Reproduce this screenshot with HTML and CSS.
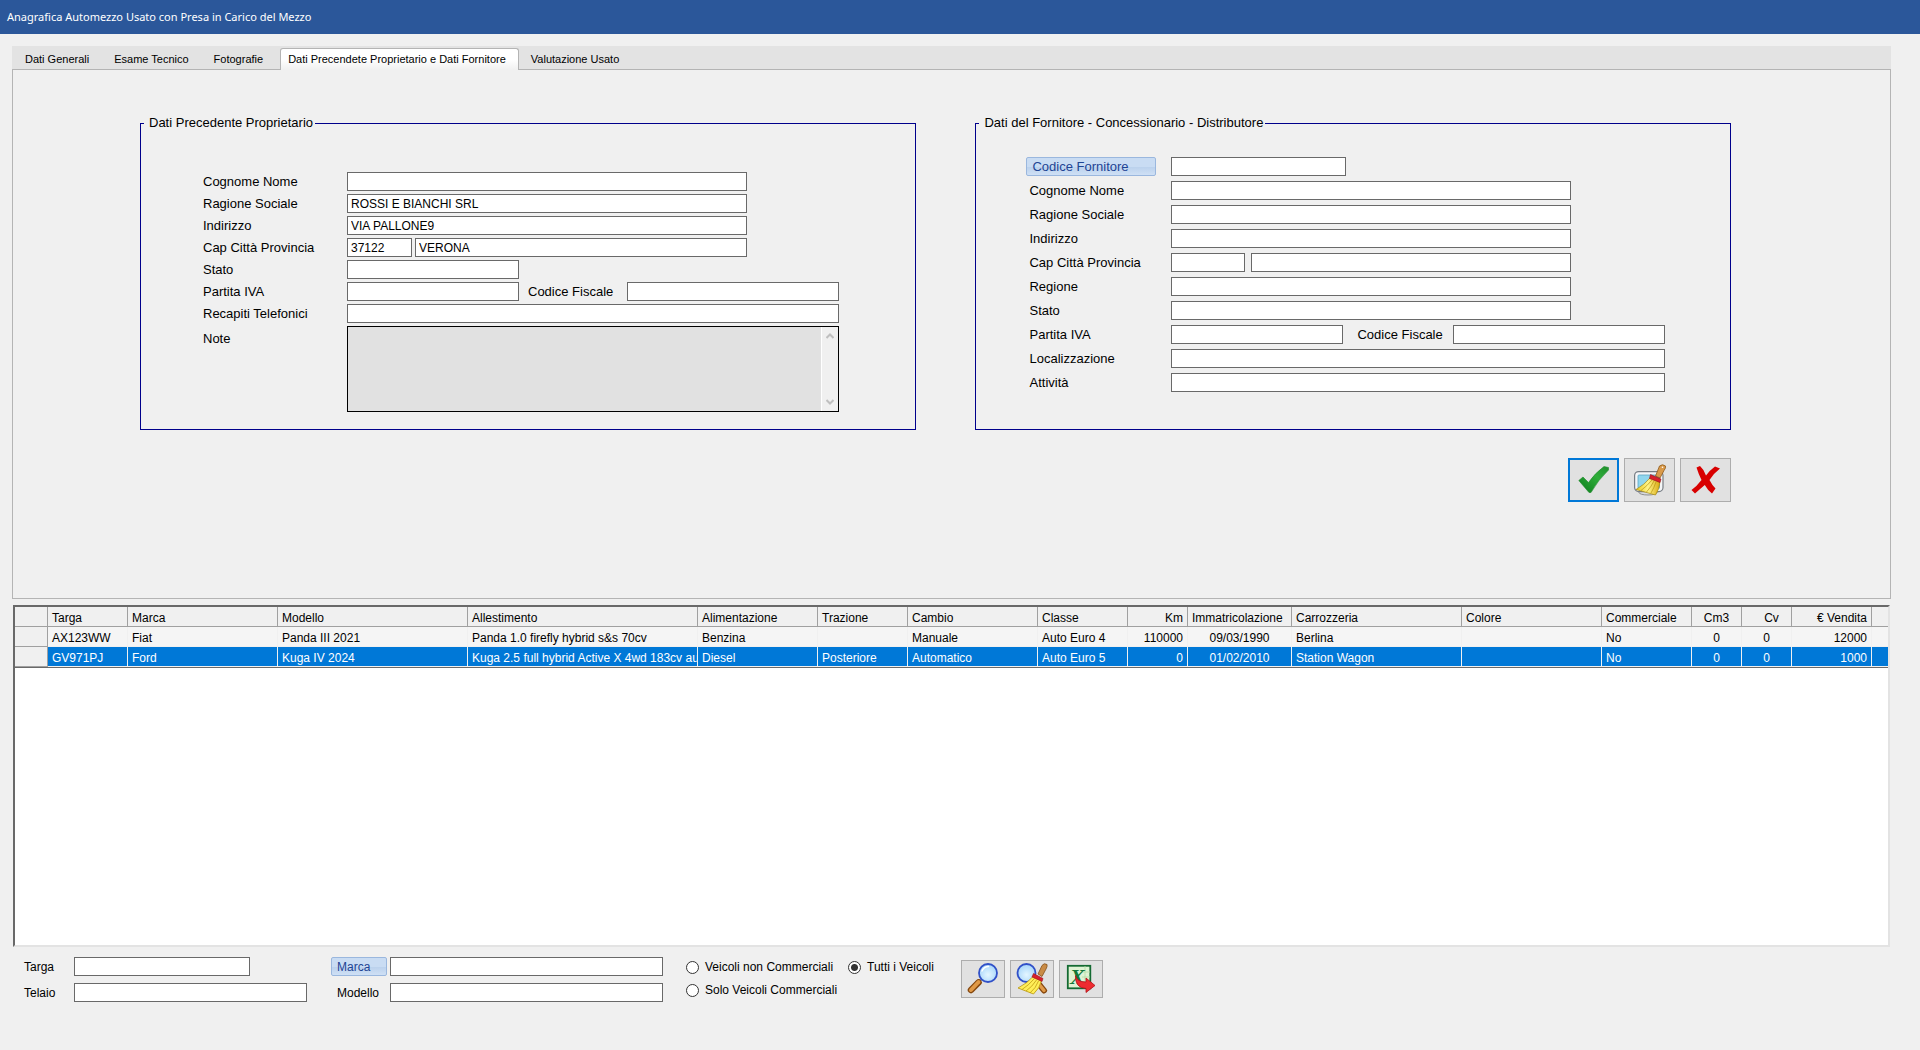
FILE: index.html
```html
<!DOCTYPE html>
<html lang="it">
<head>
    <meta charset="UTF-8">
    <meta name="viewport" content="width=device-width, initial-scale=1.0">
    <title>Anagrafica Automezzo Usato</title>
    <link rel="stylesheet" href="styles.css">
</head>
<body>
<header class="titlebar">Anagrafica Automezzo Usato con Presa in Carico del Mezzo</header>
<main class="main">
    <div class="tabs" role="tablist">
        <button class="tab" type="button" role="tab">Dati Generali</button>
        <button class="tab" type="button" role="tab">Esame Tecnico</button>
        <button class="tab" type="button" role="tab">Fotografie</button>
        <button class="tab active" type="button" role="tab" aria-selected="true">Dati Precendete Proprietario e Dati Fornitore</button>
        <button class="tab" type="button" role="tab">Valutazione Usato</button>
    </div>
    <section class="panel">
        <div class="boxes">
            <fieldset class="box owner">
                <legend>Dati Precedente Proprietario</legend>
                <div class="row">
                    <label for="o-nome">Cognome Nome</label>
                    <input class="w-long" id="o-nome" type="text">
                </div>
                <div class="row">
                    <label for="o-ragione">Ragione Sociale</label>
                    <input class="w-long" id="o-ragione" type="text" value="ROSSI E BIANCHI SRL">
                </div>
                <div class="row">
                    <label for="o-indirizzo">Indirizzo</label>
                    <input class="w-long" id="o-indirizzo" type="text" value="VIA PALLONE9">
                </div>
                <div class="row">
                    <label for="o-cap">Cap Città Provincia</label>
                    <div class="pair w-long">
                        <input class="cap" id="o-cap" type="text" value="37122">
                        <input class="grow" type="text" value="VERONA" aria-label="Città">
                    </div>
                </div>
                <div class="row">
                    <label for="o-stato">Stato</label>
                    <input class="w-short" id="o-stato" type="text">
                </div>
                <div class="row">
                    <label for="o-iva">Partita IVA</label>
                    <input class="w-short" id="o-iva" type="text">
                    <label class="second" for="o-cf">Codice Fiscale</label>
                    <input class="w-cf" id="o-cf" type="text">
                </div>
                <div class="row">
                    <label for="o-tel">Recapiti Telefonici</label>
                    <input class="w-full" id="o-tel" type="text">
                </div>
                <div class="row note-row">
                    <label for="o-note">Note</label>
                    <div class="note w-full">
                        <textarea id="o-note"></textarea>
                        <div class="scroll">
                            <svg width="8" height="6" viewBox="0 0 8 6"><path d="M0.5 5L4 1.5L7.5 5"/></svg>
                            <svg width="8" height="6" viewBox="0 0 8 6"><path d="M0.5 1L4 4.5L7.5 1"/></svg>
                        </div>
                    </div>
                </div>
            </fieldset>
            <fieldset class="box supplier">
                <legend>Dati del Fornitore - Concessionario - Distributore</legend>
                <div class="row">
                    <button class="link-btn" type="button">Codice Fornitore</button>
                    <input class="w-code" type="text" aria-label="Codice Fornitore">
                </div>
                <div class="row">
                    <label for="s-nome">Cognome Nome</label>
                    <input class="w-long" id="s-nome" type="text">
                </div>
                <div class="row">
                    <label for="s-ragione">Ragione Sociale</label>
                    <input class="w-long" id="s-ragione" type="text">
                </div>
                <div class="row">
                    <label for="s-indirizzo">Indirizzo</label>
                    <input class="w-long" id="s-indirizzo" type="text">
                </div>
                <div class="row">
                    <label for="s-cap">Cap Città Provincia</label>
                    <div class="pair w-long">
                        <input class="cap" id="s-cap" type="text">
                        <input class="grow" type="text" aria-label="Città">
                    </div>
                </div>
                <div class="row">
                    <label for="s-regione">Regione</label>
                    <input class="w-long" id="s-regione" type="text">
                </div>
                <div class="row">
                    <label for="s-stato">Stato</label>
                    <input class="w-long" id="s-stato" type="text">
                </div>
                <div class="row">
                    <label for="s-iva">Partita IVA</label>
                    <input class="w-short" id="s-iva" type="text">
                    <label class="second" for="s-cf">Codice Fiscale</label>
                    <input class="w-cf" id="s-cf" type="text">
                </div>
                <div class="row">
                    <label for="s-loc">Localizzazione</label>
                    <input class="w-full" id="s-loc" type="text">
                </div>
                <div class="row">
                    <label for="s-att">Attività</label>
                    <input class="w-full" id="s-att" type="text">
                </div>
            </fieldset>
        </div>
        <div class="actions">
            <button class="icon-btn big focus" type="button" aria-label="Conferma">
                <svg width="32" height="32" viewBox="0 0 32 32">
                    <defs>
                        <linearGradient id="green" x1="0" y1="1" x2="1" y2="0">
                            <stop offset="0" stop-color="#0c7a1c"/>
                            <stop offset="0.6" stop-color="#2fae3a"/>
                            <stop offset="1" stop-color="#1f8f2c"/>
                        </linearGradient>
                    </defs>
                    <path d="M0.8 16.5L5 13L10.5 18.5Q17 9 26 2.5L30.5 3.5V6Q20 16 13 28.5H11Z" fill="url(#green)" stroke="#1d8a2a" stroke-width="0.6"/>
                </svg>
            </button>
            <button class="icon-btn big" type="button" aria-label="Pulisci">
                <svg width="32" height="32" viewBox="0 0 32 32">
                    <defs>
                        <linearGradient id="straw" x1="0" y1="0" x2="1" y2="0">
                            <stop offset="0" stop-color="#e8c818"/>
                            <stop offset="0.5" stop-color="#fff58a"/>
                            <stop offset="1" stop-color="#d8a810"/>
                        </linearGradient>
                    </defs>
                    <ellipse cx="14" cy="28.5" rx="9" ry="2.5" fill="#d8dade" stroke="#777" stroke-width="0.8"/>
                    <rect x="0.6" y="7.6" width="28.4" height="20" rx="4" fill="#f4f6f8" stroke="#777d84" stroke-width="1.2"/>
                    <rect x="4" y="11" width="21.5" height="13.5" rx="1" fill="#8fd6ee" stroke="#5aa5c2" stroke-width="0.8"/>
                    <path d="M21.5 12L25.5 2Q28.5 -0.5 31.500 2Q32 4 30 6.500L26 14Z" fill="#d99a4a" stroke="#8f5a1c" stroke-width="0.8"/>
                    <path d="M16.5 13.5L26 17.5Q25.500 25 21.5 31L2 25.5Q10 21 16.5 13.5Z" fill="url(#straw)" stroke="#a88a10" stroke-width="0.7"/>
                    <path d="M18 16Q13 22 7 26.5M20 17Q17 23 12.5 28M22 18Q20 24 17 29" fill="none" stroke="#b89410" stroke-width="0.7"/>
                    <path d="M16.5 10.5L27 15L26 18.5L15.5 14.5Z" fill="#d8202c" stroke="#8f0f18" stroke-width="0.6"/>
                    <circle cx="28.5" cy="3.2" r="0.8" fill="#fff"/>
                </svg>
            </button>
            <button class="icon-btn big" type="button" aria-label="Annulla">
                <svg width="32" height="32" viewBox="0 0 32 32">
                    <path d="M6.5 3.5L10 2Q14 5.5 16 11.5Q20 6 25 2.5L30 4.5Q24 9 19.5 16Q22 21 25.5 24.5L22 29.5Q17.5 26 14.8 21Q10 25 5 29.5L1.5 26Q7 22 11.5 16Q8.500 10 6.5 3.5Z" fill="#d80000"/>
                </svg>
            </button>
        </div>
    </section>
    <div class="grid">
        <table>
            <colgroup>
                <col class="c-sel"><col class="c-targa"><col class="c-marca"><col class="c-modello"><col class="c-allest">
                <col class="c-alim"><col class="c-traz"><col class="c-cambio"><col class="c-classe"><col class="c-km">
                <col class="c-immat"><col class="c-carr"><col class="c-colore"><col class="c-comm"><col class="c-cm3">
                <col class="c-cv"><col class="c-vendita"><col>
            </colgroup>
            <thead>
            <tr>
                <th></th><th>Targa</th><th>Marca</th><th>Modello</th><th>Allestimento</th><th>Alimentazione</th>
                <th>Trazione</th><th>Cambio</th><th>Classe</th><th class="num">Km</th><th>Immatricolazione</th>
                <th>Carrozzeria</th><th>Colore</th><th>Commerciale</th><th class="mid">Cm3</th><th class="mid cv">Cv</th>
                <th class="num">€ Vendita</th><th></th>
            </tr>
            </thead>
            <tbody>
            <tr>
                <td></td><td>AX123WW</td><td>Fiat</td><td>Panda III 2021</td><td>Panda 1.0 firefly hybrid s&amp;s 70cv</td>
                <td>Benzina</td><td></td><td>Manuale</td><td>Auto Euro 4</td><td class="num">110000</td>
                <td class="mid">09/03/1990</td><td>Berlina</td><td></td><td>No</td><td class="mid">0</td>
                <td class="mid">0</td><td class="num">12000</td><td></td>
            </tr>
            <tr class="selected">
                <td></td><td>GV971PJ</td><td>Ford</td><td>Kuga IV 2024</td><td>Kuga 2.5 full hybrid Active X 4wd 183cv au</td>
                <td>Diesel</td><td>Posteriore</td><td>Automatico</td><td>Auto Euro 5</td><td class="num">0</td>
                <td class="mid">01/02/2010</td><td>Station Wagon</td><td></td><td>No</td><td class="mid">0</td>
                <td class="mid">0</td><td class="num">1000</td><td></td>
            </tr>
            </tbody>
        </table>
    </div>
</main>
<footer class="filters">
    <div class="group first">
        <label for="f-targa">Targa</label>
        <input class="w-targa" id="f-targa" type="text">
        <label for="f-telaio">Telaio</label>
        <input id="f-telaio" type="text">
    </div>
    <div class="group second-group">
        <button class="link-btn" type="button">Marca</button>
        <input type="text" aria-label="Marca">
        <label for="f-modello">Modello</label>
        <input id="f-modello" type="text">
    </div>
    <div class="radios">
        <label><input type="radio" name="tipo">Veicoli non Commerciali</label>
        <label><input type="radio" name="tipo" checked>Tutti i Veicoli</label>
        <label><input type="radio" name="tipo">Solo Veicoli Commerciali</label>
    </div>
    <div class="tools">
        <button class="icon-btn" type="button" aria-label="Cerca">
            <svg width="32" height="32" viewBox="0 0 32 32">
                <defs>
                    <radialGradient id="lens" cx="0.5" cy="0.6" r="0.6">
                        <stop offset="0" stop-color="#e4f6ff"/>
                        <stop offset="1" stop-color="#a4d4fa"/>
                    </radialGradient>
                </defs>
                <path d="M12.5 17.5L15 16" stroke="#888" stroke-width="2.5"/>
                <path d="M4 27L11.5 19.5" stroke="#84460c" stroke-width="6.5" stroke-linecap="round"/>
                <path d="M4 27L11.5 19" stroke="#e09a48" stroke-width="4" stroke-linecap="round"/>
                <circle cx="21" cy="10" r="9" fill="url(#lens)" stroke="#3050c8" stroke-width="1.8"/>
                <path d="M15 8Q17 3.5 21.5 3.5" fill="none" stroke="#fff" stroke-width="1.5" stroke-linecap="round"/>
            </svg>
        </button>
        <button class="icon-btn" type="button" aria-label="Pulisci ricerca">
            <svg width="32" height="32" viewBox="0 0 32 32">
                <path d="M22 20L28 27.5" stroke="#84460c" stroke-width="6" stroke-linecap="round"/>
                <path d="M22 20L28 27.5" stroke="#e09a48" stroke-width="3.5" stroke-linecap="round"/>
                <circle cx="10.5" cy="10" r="9" fill="url(#lens)" stroke="#3050c8" stroke-width="1.8"/>
                <path d="M22 11L26 2.5Q28 -0.5 31 1.5Q31.5 3.5 30 6L26 13.5Z" fill="#c98b45" stroke="#84501a" stroke-width="0.8"/>
                <path d="M17 13.5L25.5 17.5Q24 25 17.5 31L2 25Q11 20.5 17 13.5Z" fill="#ffee58" stroke="#b8960c" stroke-width="0.8"/>
                <path d="M18.5 15.5Q13 22 6 26.5M20.5 17Q16 24 10 28M22.5 18Q20 25 14 30" fill="none" stroke="#c09c10" stroke-width="0.8"/>
                <path d="M17.5 10.5L27 15.5L26 18.5L16 14Z" fill="#d8202c" stroke="#98101a" stroke-width="0.6"/>
            </svg>
        </button>
        <button class="icon-btn" type="button" aria-label="Esporta in Excel">
            <svg width="32" height="32" viewBox="0 0 32 32">
                <rect x="2.8" y="2.8" width="22.5" height="22.5" fill="#dff3d4" stroke="#146a32" stroke-width="1.8"/>
                <path d="M17 9H25M17 14H25M20 3V25" stroke="#b4dca4" stroke-width="0.8"/>
                <text class="xls" x="5" y="20.5">X</text>
                <path d="M10.5 12.5Q12 19 21 19V15L30 22.5L21 29.5V25.5Q10 25 10.5 12.5Z" fill="#ee2c30" stroke="#b01018" stroke-width="0.8"/>
            </svg>
        </button>
    </div>
</footer>
</body>
</html>
```
FILE: styles.css
```css
*{
    margin: 0;
    padding: 0;
    box-sizing: border-box;
}
body{
    display: flex;
    flex-direction: column;
    min-height: 100vh;
    background: #f0f0f0;
    color: #000;
    font-family: "Liberation Sans", Arial, sans-serif;
    font-size: 12px;
}
button, input, textarea{
    font-family: inherit;
    font-size: 12px;
    color: #000;
}
input[type="text"]{
    min-width: 0;
    height: 19px;
    padding: 1px 3px 0;
    border: 1px solid #696969;
    background: #fff;
}
.titlebar{
    height: 34px;
    padding-left: 7px;
    line-height: 34px;
    background: #2b579a;
    color: #fff;
    font-family: "Noto Sans", "Open Sans", sans-serif;
    font-size: 11px;
}
.main{
    flex: 1;
    display: flex;
    flex-direction: column;
    padding: 12px 29px 0 12px;
}

/* tabs */
.tabs{
    display: flex;
    height: 23px;
    padding-left: 1px;
    background: #e3e3e3;
}
.tab{
    height: 23px;
    margin-left: 4px;
    padding: 1px 12px 0 7px;
    border: 1px solid transparent;
    border-bottom: 0;
    background: none;
    font-size: 11px;
    white-space: nowrap;
}
.tab.active{
    height: 22px;
    margin-top: 2px;
    padding: 0 12px 2px 7px;
    border-color: #b4b4b4;
    border-radius: 3px 3px 0 0;
    background: linear-gradient(#fff 50%, #f0f0f0);
    z-index: 1;
}
.panel{
    padding: 45px 159px 96px 127px;
    border: 1px solid #b4b4b4;
}

/* group boxes */
.boxes{
    display: grid;
    grid-template-columns: 777fr 756fr;
    gap: 59px;
}
.box{
    display: flex;
    flex-direction: column;
    min-width: 0;
    border: 1px solid #00008b;
    font-size: 13px;
}
.box legend{
    height: 16px;
    padding: 0 2px 0 5px;
    line-height: 16px;
}
.owner{
    gap: 3px;
    padding: 41px 3px 17px 3px;
}
.supplier{
    gap: 5px;
    padding: 26px 3px 17px 3px;
}
.row{
    display: flex;
    align-items: center;
    margin-left: 59px;
}
.row > label:first-child{
    width: 144px;
}
.supplier .row{
    margin-left: 47px;
}
.supplier .row > label:first-child{
    width: 145px;
    padding-left: 3px;
}
.supplier .link-btn{
    width: 130px;
    margin-right: 15px;
    font-size: 13px;
}
.row .second{
    width: 108px;
    padding-left: 9px;
}
.supplier .second{
    width: 110px;
    padding-left: 14px;
}
.w-short{
    width: 172px;
}
.w-code{
    width: 175px;
}
.w-long{
    width: 400px;
}
.w-cf{
    width: 212px;
}
.w-full{
    width: 492px;
}
.supplier .w-full{
    width: 494px;
}
.pair{
    display: flex;
    gap: 3px;
}
.supplier .pair{
    gap: 6px;
}
.cap{
    width: 65px;
}
.supplier .cap{
    width: 74px;
}
.grow{
    flex: 1;
}
.note-row{
    align-items: flex-start;
}
.note-row > label{
    padding-top: 5px;
}
.note{
    display: flex;
    height: 86px;
    border: 1px solid #000;
}
.note textarea{
    flex: 1;
    border: 0;
    background: #e1e1e1;
    resize: none;
}
.scroll{
    display: flex;
    flex-direction: column;
    justify-content: space-between;
    align-items: center;
    width: 17px;
    padding: 6px 0;
    border-left: 1px solid #fff;
    background: #f0f0f0;
}
.scroll path{
    fill: none;
    stroke: #bfbfbf;
    stroke-width: 2;
}

/* buttons */
.link-btn{
    height: 19px;
    padding-left: 5px;
    border: 1px solid #9ab7de;
    border-radius: 2px;
    background: linear-gradient(#c9dcf3 50%, #b9d0ec 50%, #cfe0f5);
    color: #1e4494;
    text-align: left;
}
.icon-btn{
    display: flex;
    align-items: center;
    justify-content: center;
    width: 44px;
    height: 38px;
    border: 1px solid #adadad;
    background: #e1e1e1;
}
.icon-btn.big{
    width: 51px;
    height: 44px;
}
.icon-btn.focus{
    border: 2px solid #0078d7;
}
.actions, .tools{
    display: flex;
    gap: 5px;
}
.actions{
    justify-content: flex-end;
    margin-top: 28px;
}
.xls{
    font: italic bold 22px "Liberation Serif", serif;
    fill: #14783a;
}

/* vehicles table */
.grid{
    flex: 1;
    margin: 6px 1px 0 1px;
    border: 2px solid;
    border-color: #696969 #e3e3e3 #e3e3e3 #696969;
    background: #fff;
}
.grid table{
    width: 100%;
    table-layout: fixed;
    border-collapse: separate;
    border-spacing: 0;
    border-bottom: 1px solid #696969;
}
.grid th, .grid td{
    height: 20px;
    padding: 2px 4px 0;
    border-right: 1px solid #f0f0f0;
    border-bottom: 1px solid #f0f0f0;
    background: #f5f5f5;
    font-weight: normal;
    line-height: 16px;
    text-align: left;
    white-space: nowrap;
    overflow: hidden;
}
.grid th, .grid td:first-child{
    border-color: #a0a0a0;
    background: #f0f0f0;
}
.grid .selected td:not(:first-child){
    background: #0078d7;
    color: #fff;
}
.grid th:last-child, .grid td:last-child{
    border-right: 0;
}
.grid .num{
    text-align: right;
}
.grid .mid{
    text-align: center;
}
.grid .cv{
    padding-left: 14px;
}
.c-sel{ width: 33px; }
.c-targa, .c-vendita{ width: 80px; }
.c-marca{ width: 150px; }
.c-modello{ width: 190px; }
.c-allest{ width: 230px; }
.c-alim{ width: 120px; }
.c-traz, .c-classe, .c-comm{ width: 90px; }
.c-cambio{ width: 130px; }
.c-km{ width: 60px; }
.c-immat{ width: 104px; }
.c-carr{ width: 170px; }
.c-colore{ width: 140px; }
.c-cm3, .c-cv{ width: 50px; }

/* search filters */
.filters{
    display: flex;
    align-items: flex-start;
    padding: 10px 24px 48px;
}
.group{
    display: grid;
    align-items: center;
    row-gap: 7px;
}
.first{
    grid-template-columns: 50px 233px;
    margin-right: 24px;
}
.w-targa{
    width: 176px;
}
.second-group{
    grid-template-columns: 56px 273px;
    column-gap: 3px;
    margin-right: 23px;
}
.second-group label{
    padding-left: 6px;
    white-space: nowrap;
}
.radios{
    display: grid;
    grid-template-columns: 162px 113px;
    row-gap: 3px;
}
.radios label{
    display: flex;
    align-items: center;
    gap: 6px;
    height: 20px;
    white-space: nowrap;
}
.radios input{
    appearance: none;
    width: 13px;
    height: 13px;
    border: 1px solid #333;
    border-radius: 50%;
    background: #fff;
}
.radios input:checked{
    background: radial-gradient(circle, #333 0 3px, #fff 4px);
}
.tools{
    margin-top: 3px;
}
```
